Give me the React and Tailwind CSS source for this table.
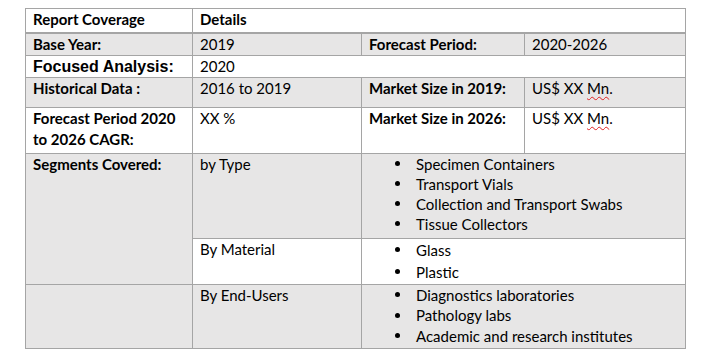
// Report coverage table - recreated from a Word-style document screenshot
const GRAY = 'bg-[#e7e6e6]';

function Cell({ children, className = '', ...rest }) {
  return (
    <td
      className={`border border-[#a5a5a5] align-top pl-[7px] pr-1 leading-[21px] ${className}`}
      {...rest}
    >
      {children}
    </td>
  );
}

function Mn() {
  return (
    <span>
      US$ XX{' '}
      <span className="underline decoration-wavy decoration-[#e02020] decoration-1 underline-offset-2">Mn</span>.
    </span>
  );
}

function Bullets({ items, className = '' }) {
  return (
    <ul className={className}>
      {items.map((item) => (
        <li key={item} className="flex items-center">
          <span className="w-[22px] pl-[1px] flex">
            <span className="w-[5px] h-[5px] rounded-full bg-black" />
          </span>
          <span>{item}</span>
        </li>
      ))}
    </ul>
  );
}

export default function App() {
  return (
    <div className="w-[702px] h-[360px] bg-white pt-2 pl-[25px] text-[15px] text-black font-['Lato','Liberation_Sans',sans-serif]">
      <table className="table-fixed border-collapse w-[660px]">
        <colgroup>
          <col className="w-[167px]" />
          <col className="w-[169px]" />
          <col className="w-[163px]" />
          <col className="w-[161px]" />
        </colgroup>
        <tbody>
          <tr className="h-[24px] border-b-2 border-[#a5a5a5]">
            <Cell className="font-bold">Report Coverage</Cell>
            <Cell colSpan={3} className="font-bold">Details</Cell>
          </tr>
          <tr className={`h-[22px] ${GRAY}`}>
            <Cell className="font-bold">Base Year:</Cell>
            <Cell>2019</Cell>
            <Cell className="font-bold">Forecast Period:</Cell>
            <Cell>2020-2026</Cell>
          </tr>
          <tr className="h-[22px]">
            <Cell className="font-bold text-[16px] font-['Liberation_Sans',sans-serif]">Focused Analysis:</Cell>
            <Cell colSpan={3}>2020</Cell>
          </tr>
          <tr className={`h-[30px] ${GRAY}`}>
            <Cell className="font-bold">Historical Data :</Cell>
            <Cell>2016 to 2019</Cell>
            <Cell className="font-bold">Market Size in 2019:</Cell>
            <Cell><Mn /></Cell>
          </tr>
          <tr className="h-[46px]">
            <Cell className="font-bold">Forecast Period 2020 to 2026 CAGR:</Cell>
            <Cell>XX %</Cell>
            <Cell className="font-bold">Market Size in 2026:</Cell>
            <Cell><Mn /></Cell>
          </tr>
          <tr className={`h-[85px] ${GRAY}`}>
            <Cell rowSpan={2} className="font-bold">Segments Covered:</Cell>
            <Cell>by Type</Cell>
            <Cell colSpan={2} className="pl-[32px]">
              <Bullets
                className="leading-[20px]"
                items={['Specimen Containers', 'Transport Vials', 'Collection and Transport Swabs', 'Tissue Collectors']}
              />
            </Cell>
          </tr>
          <tr className="h-[46px]">
            <Cell className="bg-white">By Material</Cell>
            <Cell colSpan={2} className="bg-white pl-[32px]">
              <Bullets className="leading-[22px]" items={['Glass', 'Plastic']} />
            </Cell>
          </tr>
          <tr className={`h-[64px] ${GRAY}`}>
            <Cell />
            <Cell>By End-Users</Cell>
            <Cell colSpan={2} className="pl-[32px]">
              <Bullets
                className="leading-[20.5px]"
                items={['Diagnostics laboratories', 'Pathology labs', 'Academic and research institutes']}
              />
            </Cell>
          </tr>
        </tbody>
      </table>
    </div>
  );
}
